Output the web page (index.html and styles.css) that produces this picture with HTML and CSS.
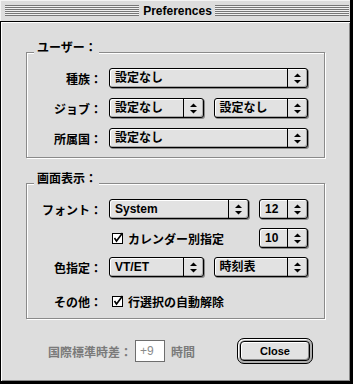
FILE: index.html
```html
<!DOCTYPE html>
<html lang="ja">
<head>
<meta charset="utf-8">
<title>Preferences</title>
<link rel="stylesheet" href="styles.css">
</head>
<body>
<div class="window">
  <div class="titlebar">
    <div class="stripes"></div>
    <div class="title">Preferences</div>
    <div class="stripes"></div>
  </div>
  <div class="content">
    <div class="group g1">
      <div class="legend">ユーザー：</div>
      <div class="row">
        <div class="label">種族：</div>
        <div class="controls">
          <div class="popup grow"><span class="val">設定なし</span><span class="arrows"><svg width="7" height="11" viewBox="0 0 7 11"><polygon points="0,4 3.5,0.5 7,4"/><polygon points="0,7 7,7 3.5,10.5"/></svg></span></div>
        </div>
      </div>
      <div class="row">
        <div class="label">ジョブ：</div>
        <div class="controls">
          <div class="popup grow"><span class="val">設定なし</span><span class="arrows"><svg width="7" height="11" viewBox="0 0 7 11"><polygon points="0,4 3.5,0.5 7,4"/><polygon points="0,7 7,7 3.5,10.5"/></svg></span></div>
          <div class="popup grow"><span class="val">設定なし</span><span class="arrows"><svg width="7" height="11" viewBox="0 0 7 11"><polygon points="0,4 3.5,0.5 7,4"/><polygon points="0,7 7,7 3.5,10.5"/></svg></span></div>
        </div>
      </div>
      <div class="row">
        <div class="label">所属国：</div>
        <div class="controls">
          <div class="popup grow"><span class="val">設定なし</span><span class="arrows"><svg width="7" height="11" viewBox="0 0 7 11"><polygon points="0,4 3.5,0.5 7,4"/><polygon points="0,7 7,7 3.5,10.5"/></svg></span></div>
        </div>
      </div>
    </div>

    <div class="group g2">
      <div class="legend">画面表示：</div>
      <div class="row">
        <div class="label">フォント：</div>
        <div class="controls">
          <div class="popup font"><span class="val">System</span><span class="arrows"><svg width="7" height="11" viewBox="0 0 7 11"><polygon points="0,4 3.5,0.5 7,4"/><polygon points="0,7 7,7 3.5,10.5"/></svg></span></div>
          <div class="popup size"><span class="val">12</span><span class="arrows"><svg width="7" height="11" viewBox="0 0 7 11"><polygon points="0,4 3.5,0.5 7,4"/><polygon points="0,7 7,7 3.5,10.5"/></svg></span></div>
        </div>
      </div>
      <div class="row">
        <div class="label"></div>
        <div class="controls">
          <div class="check"><svg width="12" height="12" viewBox="0 0 12 12"><rect x="0.5" y="1.5" width="10" height="10" fill="#fff" stroke="#000"/><path d="M2.5 6 L4.5 9 L10.5 1" fill="none" stroke="#000" stroke-width="1.6"/></svg><span>カレンダー別指定</span></div>
          <div class="popup size push"><span class="val">10</span><span class="arrows"><svg width="7" height="11" viewBox="0 0 7 11"><polygon points="0,4 3.5,0.5 7,4"/><polygon points="0,7 7,7 3.5,10.5"/></svg></span></div>
        </div>
      </div>
      <div class="row">
        <div class="label">色指定：</div>
        <div class="controls">
          <div class="popup grow"><span class="val">VT/ET</span><span class="arrows"><svg width="7" height="11" viewBox="0 0 7 11"><polygon points="0,4 3.5,0.5 7,4"/><polygon points="0,7 7,7 3.5,10.5"/></svg></span></div>
          <div class="popup grow"><span class="val">時刻表</span><span class="arrows"><svg width="7" height="11" viewBox="0 0 7 11"><polygon points="0,4 3.5,0.5 7,4"/><polygon points="0,7 7,7 3.5,10.5"/></svg></span></div>
        </div>
      </div>
      <div class="row last">
        <div class="label">その他：</div>
        <div class="controls">
          <div class="check"><svg width="12" height="12" viewBox="0 0 12 12"><rect x="0.5" y="1.5" width="10" height="10" fill="#fff" stroke="#000"/><path d="M2.5 6 L4.5 9 L10.5 1" fill="none" stroke="#000" stroke-width="1.6"/></svg><span>行選択の自動解除</span></div>
        </div>
      </div>
    </div>

    <div class="footer">
      <span class="dim">国際標準時差：</span>
      <span class="field">+9</span>
      <span class="dim hours">時間</span>
      <div class="default-ring"><div class="button">Close</div></div>
    </div>
  </div>
</div>
</body>
</html>
```

FILE: styles.css
```css
html, body {
  margin: 0;
  padding: 0;
  background: #dddddd;
}

body {
  font-family: "Liberation Sans", "Noto Sans CJK JP", sans-serif;
  font-size: 12px;
  font-weight: bold;
  color: #000;
}

.window {
  width: 353px;
  height: 384px;
  box-sizing: border-box;
  background: #dddddd;
  border-right: 3px solid #000;
  border-bottom: 3px solid #000;
  display: flex;
  flex-direction: column;
}

.titlebar {
  height: 21px;
  border-bottom: 1px solid #000;
  display: flex;
  align-items: center;
  padding: 0 1px 0 5px;
  background: #dddddd;
  box-shadow: inset 1px 1px 0 #f4f4f4;
}

.stripes {
  flex: 1;
  height: 11px;
  background: repeating-linear-gradient(to bottom, #777777 0 1px, #f0f0f0 1px 2px);
}

.title {
  padding: 0 3px 0 4px;
  font-size: 12px;
  line-height: 14px;
}

.content {
  flex: 1;
  border-left: 1px solid #000;
  box-shadow: inset 1px 1px 0 #ffffff, inset -1px -1px 0 #8a8a8a;
  padding: 30px 0 0 25px;
}

.group {
  position: relative;
  width: 299px;
  box-sizing: border-box;
  border: 1px solid #8a8a8a;
  box-shadow: inset 1px 1px 0 #ffffff, 1px 1px 0 #ffffff;
  padding: 15px 0 9px 0;
  display: flex;
  flex-direction: column;
  gap: 10px;
}

.g2 {
  margin-top: 25px;
  gap: 9px;
  padding-bottom: 7px;
}

.g2 .row.last {
  margin-top: 5px;
}

.legend {
  position: absolute;
  top: -12px;
  left: 7px;
  padding: 0 2px 0 3px;
  line-height: 14px;
  background: #dddddd;
}

.row {
  display: flex;
  align-items: center;
  height: 20px;
}

.label {
  width: 75px;
  margin-right: 7px;
  text-align: right;
  white-space: nowrap;
}

.controls {
  width: 199px;
  display: flex;
  align-items: center;
  gap: 10px;
}

.popup {
  height: 20px;
  box-sizing: border-box;
  border: 1px solid #000;
  border-radius: 3px;
  background: #e2e2e2;
  box-shadow: inset 1px 1px 0 #ffffff, inset -1px -1px 0 #a8a8a8, 1px 1px 0 #8a8a8a;
  display: flex;
  align-items: stretch;
}

.popup.grow { flex: 1; }
.popup.font { width: 140px; }
.popup.size { width: 49px; }
.popup.push { margin-left: auto; }

.val {
  flex: 1;
  padding-left: 5px;
  line-height: 18px;
  white-space: nowrap;
  overflow: hidden;
}

.arrows {
  width: 19px;
  border-left: 1px solid #000;
  display: flex;
  align-items: center;
  justify-content: center;
}

.arrows svg { display: block; }

.check {
  display: flex;
  align-items: center;
  gap: 4px;
  padding-left: 3px;
  white-space: nowrap;
}

.check svg { display: block; }

.footer {
  margin-top: 19px;
  height: 26px;
  display: flex;
  align-items: center;
  margin-left: 22px;
  padding-right: 37px;
}

.dim {
  color: #7a7a7a;
}

.field {
  width: 30px;
  height: 22px;
  box-sizing: border-box;
  margin-left: 3px;
  border: 1px solid #6e6e6e;
  background: #ffffff;
  color: #8a8a8a;
  font-weight: normal;
  font-family: "Liberation Sans", sans-serif;
  line-height: 20px;
  padding-left: 4px;
}

.hours {
  margin-left: 6px;
}

.default-ring {
  margin-left: auto;
  width: 76px;
  height: 26px;
  box-sizing: border-box;
  border: 1px solid #000;
  border-radius: 7px;
  padding: 2px;
  background: #b0b0b0;
  box-shadow: inset 1px 1px 0 #ffffff;
}

.button {
  height: 100%;
  box-sizing: border-box;
  border: 1px solid #000;
  border-radius: 4px;
  background: #e2e2e2;
  box-shadow: inset 1px 1px 0 #ffffff, inset -1px -1px 0 #8a8a8a;
  display: flex;
  align-items: center;
  justify-content: center;
  font-size: 11px;
}
```
